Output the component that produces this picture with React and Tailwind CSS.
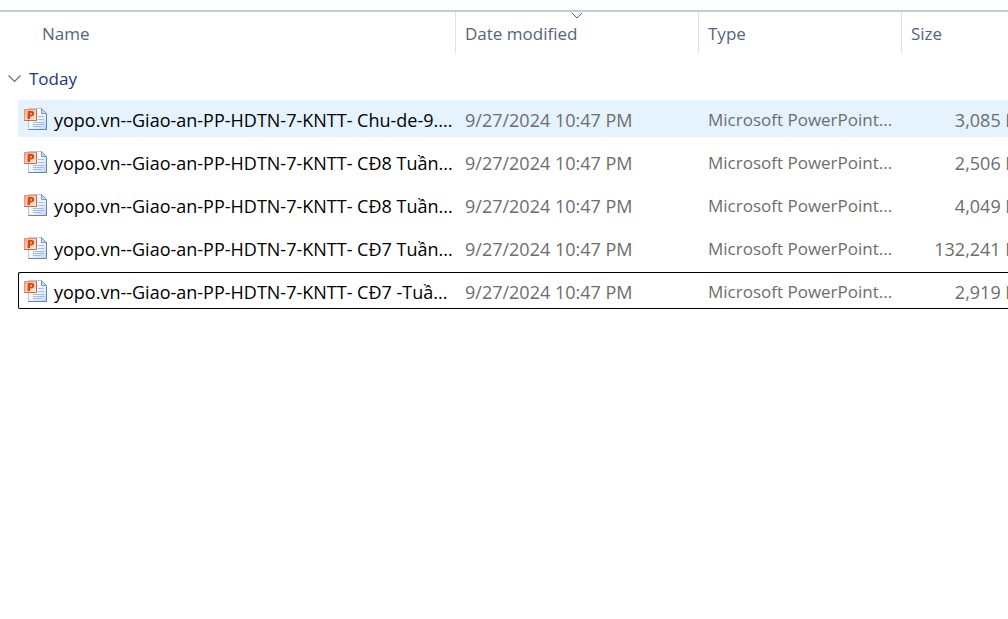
import React from "react";

const files = [
  { name: "yopo.vn--Giao-an-PP-HDTN-7-KNTT- Chu-de-9....", size: "3,085 KB", state: "hover" },
  { name: "yopo.vn--Giao-an-PP-HDTN-7-KNTT- CĐ8 Tuần...", size: "2,506 KB" },
  { name: "yopo.vn--Giao-an-PP-HDTN-7-KNTT- CĐ8 Tuần...", size: "4,049 KB" },
  { name: "yopo.vn--Giao-an-PP-HDTN-7-KNTT- CĐ7 Tuần...", size: "132,241 KB" },
  { name: "yopo.vn--Giao-an-PP-HDTN-7-KNTT- CĐ7 -Tuầ...", size: "2,919 KB", state: "focus" },
];

const rowStyles = {
  hover: "border-[#e5f3ff] bg-[#e5f3ff]",
  focus: "border-black",
  plain: "border-transparent",
};

function PowerPointIcon() {
  return (
    <svg className="h-6 w-6 shrink-0" viewBox="0 0 24 24" aria-hidden="true">
      <defs>
        <linearGradient id="page" x1="0" y1="0" x2="1" y2="1">
          <stop offset="0" stopColor="#ffffff" />
          <stop offset="0.55" stopColor="#f1f6fd" />
          <stop offset="1" stopColor="#bcd4f2" />
        </linearGradient>
        <linearGradient id="badge" x1="0" y1="0" x2="1" y2="1">
          <stop offset="0" stopColor="#f3a083" />
          <stop offset="0.5" stopColor="#fbd3bd" />
          <stop offset="1" stopColor="#fff0df" />
        </linearGradient>
      </defs>
      <path d="M5.5 1.5H18.5L23.5 6.5V22.5H5.5Z" fill="url(#page)" stroke="#b4c7df" />
      <path d="M23.5 6.5V22.5H5.5" fill="none" stroke="#6683b0" />
      <path d="M18.5 1.5V6.5H23.5Z" fill="#c9daee" stroke="#7f99bc" />
      <path d="M15 9.5H21M15 12.5H21M10 15.5H21M10 17.5H21M10 19.5H18" stroke="#a3bce6" />
      <rect x="1.5" y="2.5" width="12" height="11" fill="url(#badge)" stroke="#ea9478" />
      <path d="M13.5 2.5V13.5H1.5" fill="none" stroke="#dd6243" />
      <path
        d="M5 4H8.4C10.7 4 11.4 5.2 11.2 6.7C11 8.5 9.8 9.4 8 9.4H7.2L6.9 12H4.4ZM7.5 5.7L7.3 7.8H7.9C8.5 7.8 8.9 7.4 8.9 6.7C8.9 6 8.6 5.7 8.1 5.7Z"
        fill="#d4480f"
        fillRule="evenodd"
      />
    </svg>
  );
}

function HeaderCell({ label, sorted }) {
  return (
    <th
      scope="col"
      aria-sort={sorted ? "descending" : undefined}
      className="relative h-[41px] border-l border-[#e2e2e2] p-0 font-normal"
    >
      {sorted && (
        <svg className="absolute top-0 left-1/2 h-2 w-3 -translate-x-1/2" viewBox="0 0 12 8" aria-hidden="true">
          <path d="M1 1L6 6L11 1" fill="none" stroke="#5a5a5a" />
        </svg>
      )}
      <button type="button" className="flex h-full w-full items-center pt-0.5 pl-[9px] text-left">
        {label}
      </button>
    </th>
  );
}

function FileRow({ file }) {
  const cell = `flex h-[37px] items-center border-y whitespace-nowrap ${rowStyles[file.state || "plain"]}`;
  return (
    <tr className="text-[#6d6d6d]">
      <td className="p-0 pb-1.5 pl-[18px]">
        <div className={`${cell} rounded-l-xs border-l pl-1 text-lg text-black`}>
          <PowerPointIcon />
          <span className="overflow-hidden pt-0.5 pl-[7px] leading-6">{file.name}</span>
        </div>
      </td>
      <td className="p-0 pb-1.5">
        <div className={`${cell} pt-0.5 pl-[10px] text-lg`}>9/27/2024 10:47 PM</div>
      </td>
      <td className="p-0 pb-1.5">
        <div className={`${cell} pt-0.5 pl-[10px]`}>Microsoft PowerPoint...</div>
      </td>
      <td className="p-0 pb-1.5">
        <div className={`${cell} justify-end pt-0.5 pr-3 text-lg`}>{file.size}</div>
      </td>
    </tr>
  );
}

export default function App() {
  return (
    <main className="min-h-screen overflow-hidden bg-white pt-[10px] font-['Open_Sans','Noto_Sans',sans-serif] text-[17px] leading-6">
      <div className="border-t-2 border-[#bccddb]">
        <table className="w-[calc(100%+32px)] table-fixed border-separate border-spacing-0">
          <colgroup>
            <col />
            <col className="w-[243px]" />
            <col className="w-[203px]" />
            <col className="w-[139px]" />
          </colgroup>
          <thead className="text-[#54657c]">
            <tr>
              <th scope="col" className="h-[41px] p-0 font-normal">
                <button type="button" className="flex h-full w-full items-center pt-0.5 pl-[42px] text-left">
                  Name
                </button>
              </th>
              <HeaderCell label="Date modified" sorted />
              <HeaderCell label="Type" />
              <HeaderCell label="Size" />
            </tr>
          </thead>
          <tbody>
            <tr>
              <th scope="colgroup" colSpan={4} className="h-[47px] p-0 font-normal text-[#1e3287]">
                <button type="button" aria-expanded="true" className="flex items-center gap-2 pt-1 pl-2">
                  <svg className="h-2 w-[13px]" viewBox="0 0 13 8" aria-hidden="true">
                    <path d="M0.5 0.5L6.5 6.5L12.5 0.5" fill="none" stroke="#707070" strokeWidth="1.2" />
                  </svg>
                  Today
                </button>
              </th>
            </tr>
            {files.map((file, i) => (
              <FileRow key={i} file={file} />
            ))}
          </tbody>
        </table>
      </div>
    </main>
  );
}
